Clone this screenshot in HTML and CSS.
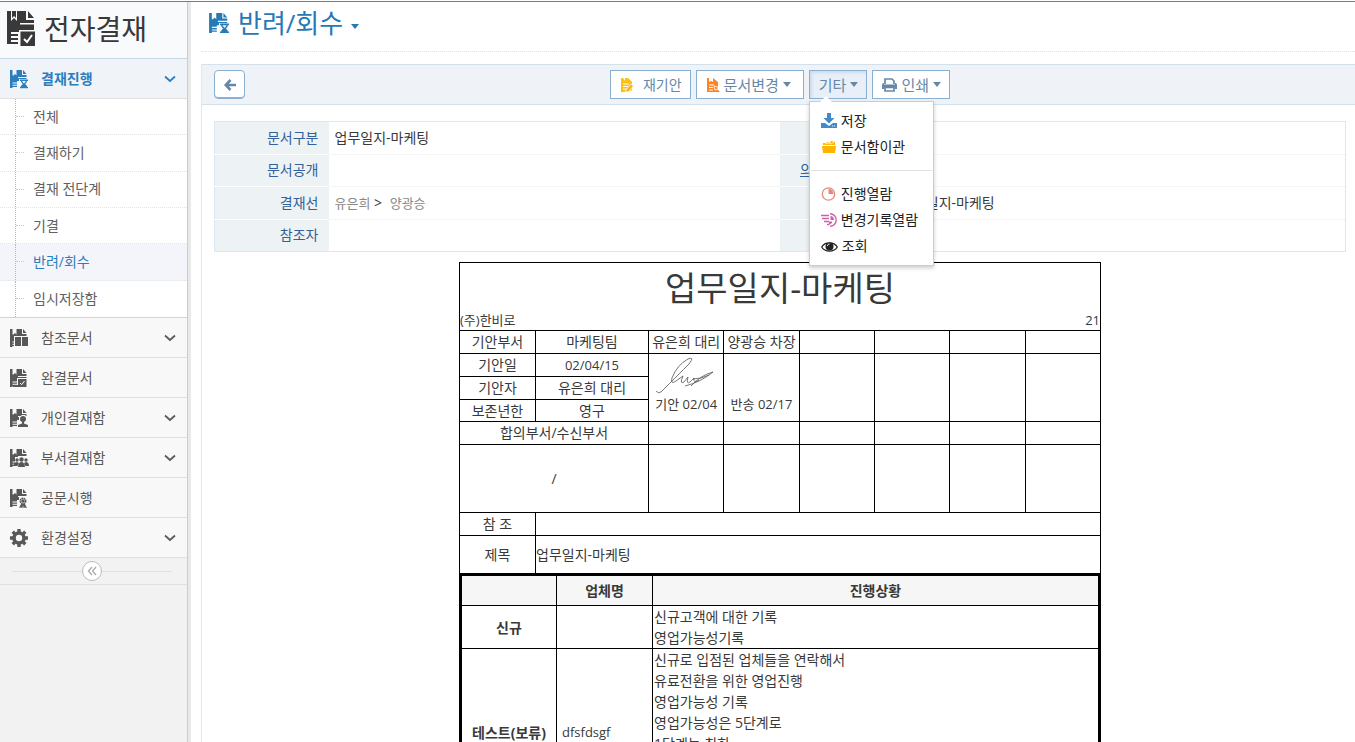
FILE: index.html
```html
<!DOCTYPE html>
<html lang="ko">
<head>
<meta charset="utf-8">
<title>전자결재</title>
<link rel="stylesheet" href="styles.css">
</head>
<body>
<svg class="defs" aria-hidden="true">
  <symbol id="doc" viewBox="0 0 20 20">
    <path d="M1 1h2.500v5.500h1L6 5l1.500 1.500V1H13v5h4.500v2H9v1h8.500v3H8v1.500H3.500v1H8v1.300H3.500v1H8V18H3.500v1H1zM14 1l3.500 4H14z"/>
  </symbol>
  <symbol id="glass" viewBox="0 0 20 20">
    <use href="#doc"/>
    <path class="cut" d="M10 10h10V20H10z"/>
    <path d="M11 10.500h8v1.500h-8zM11 17.700h8v1.500h-8zM12 12h1l2 2.500 2-2.500h1c0 1.500-1 2.200-2 3 1 .8 2 1.300 2 2.700h-6c0-1.400 1-1.900 2-2.700-1-.8-2-1.500-2-3z"/>
  </symbol>
  <symbol id="down" viewBox="0 0 12 8"><path d="M1 1.500l5 4.500 5-4.500" fill="none" stroke="currentColor" stroke-width="1.700"/></symbol>
</svg>
<div class="app">
  <nav class="side">
    <h1 class="brand">
      <svg class="brand-icon" viewBox="0 0 28 35"><path d="M0 0h4v10l3-3 3 3V0h9v9h8v3H13v1.500h14V19H12v2H4v2h7v2H4v2h7v2H4v2h7v2H0zM21 0l6 7h-6zM13 20h15v15H13z"/><path d="M5 0h4v7L7 5 5 7z"/><path d="M12 19h16v1.500H13.500V35H12z" class="cut"/><path d="M17 28l3 3 5-7" fill="none" stroke="#fff" stroke-width="2"/></svg>
      전자결재
    </h1>
    <button class="item open"><svg class="ic"><use href="#glass"/></svg><span>결재진행</span><svg class="chev"><use href="#down"/></svg></button>
    <ul class="sub">
      <li><a href="#">전체</a></li>
      <li><a href="#">결재하기</a></li>
      <li><a href="#">결재 전단계</a></li>
      <li><a href="#">기결</a></li>
      <li class="on"><a href="#">반려/회수</a></li>
      <li><a href="#">임시저장함</a></li>
    </ul>
    <button class="item"><svg class="ic" viewBox="0 0 20 20"><use href="#doc"/><path class="cut" d="M5 8h15v12H5z"/><path d="M6 9h6v9H6zM13 9h6v9h-6z"/></svg><span>참조문서</span><svg class="chev"><use href="#down"/></svg></button>
    <button class="item"><svg class="ic" viewBox="0 0 20 20"><use href="#doc"/><path class="cut" d="M8 10h10v10H8z"/><path d="M9 11h8.500v8H9zM4 17h5v2H4z"/><path d="M11 15l1.700 1.700L15.500 13" fill="none" stroke="#f8f8f8"/></svg><span>완결문서</span></button>
    <button class="item"><svg class="ic" viewBox="0 0 20 20"><use href="#doc"/><path class="cut" d="M8 20l2-4V9l3-2h3l3 3v10z"/><circle cx="14" cy="11" r="3"/><path d="M13 13h2v2.500l4 1.500v2H9v-2l4-1.500z"/></svg><span>개인결재함</span><svg class="chev"><use href="#down"/></svg></button>
    <button class="item"><svg class="ic" viewBox="0 0 20 20"><use href="#doc"/><path class="cut" d="M6 9h14v11H6z"/><circle cx="8" cy="12" r="1.700"/><circle cx="17" cy="12" r="1.700"/><circle cx="12.500" cy="11.500" r="2.200"/><path d="M4.500 18c0-3 1.500-4 3.500-4l2 1-1.500 3zM20 18c0-3-1.500-4-3-4l-2 1 1.500 3zM9 19c0-3 1.500-5 3.500-5s3.500 2 3.500 5z"/></svg><span>부서결재함</span><svg class="chev"><use href="#down"/></svg></button>
    <button class="item"><svg class="ic" viewBox="0 0 20 20"><use href="#doc"/><path class="cut" d="M10 9h9v11h-9z"/><circle cx="14" cy="13" r="2.500" fill="none" stroke="currentColor" stroke-width="2" stroke-dasharray="1.500 .5"/><circle cx="14" cy="13" r="1.300"/><path d="M12 16l-2 4 2-.5L13.500 20l.5-3 .5 3 1.500-.5 2 .5-2-4z"/></svg><span>공문시행</span></button>
    <button class="item"><svg class="ic" viewBox="0 0 20 20"><circle cx="10" cy="10" r="5" fill="none" stroke="currentColor" stroke-width="3.600"/><path d="M8.300 1h3.400v3H8.300zM8.300 16h3.400v3H8.300zM1 8.300h3v3.400H1zM16 8.300h3v3.400h-3zM2.500 5l2.400-2.400L7 4.700 4.700 7zM13 4.700l2.100-2.100L17.500 5l-2.200 2zM2.500 15l2.200-2L7 15.300l-2.100 2.100zM13 15.300l2.300-2.300 2.200 2-2.400 2.400z"/></svg><span>환경설정</span><svg class="chev"><use href="#down"/></svg></button>
    <div class="fold"><button class="fold-btn" aria-label="메뉴 접기"><svg width="10" height="10" viewBox="0 0 10 10"><path d="M5 1L1.500 5 5 9M9 1L5.500 5 9 9" fill="none" stroke="currentColor" stroke-width="1.300"/></svg></button></div>
  </nav>
  <main class="main">
    <h2 class="title"><svg class="title-icon"><use href="#glass"/></svg><span>반려/회수</span><i class="tri"></i></h2>
    <section class="panel">
      <div class="bar">
        <button class="btn back" aria-label="뒤로"><svg width="12" height="12" viewBox="0 0 12 12"><path d="M6.500 1L1.800 6l4.700 5M2 6h10" fill="none" stroke="currentColor" stroke-width="2.600"/></svg></button>
        <div class="group">
          <button class="btn redo"><svg width="14" height="16" viewBox="0 0 14 16"><path d="M1 1h2l2 3V1h3l4 4v8l-4 2H1z" fill="#fcc00e"/><path d="M3 7h6M3 9.500h5M3 12h4" stroke="#fff"/><path d="M6 13l5-6 2.500 2-5 5.500-3 .5z" fill="#f4b324" stroke="#fff" stroke-width=".7"/></svg>재기안</button>
          <button class="btn change"><svg width="14" height="16" viewBox="0 0 14 16"><path d="M1 1h2v4l2-1 2 1V1l5 4v8l2 2H1z" fill="#fb8428"/><path d="M3 8h5M3 10.500h4M3 13h4" stroke="#fff"/><path d="M8 9l4 1v2l-3 1z" fill="#fb8428" stroke="#fff" stroke-width=".8"/></svg>문서변경<i class="tri"></i></button>
          <div class="drop">
            <button class="btn active" aria-expanded="true">기타<i class="tri"></i></button>
            <div class="menu">
              <a href="#"><svg width="16" height="16" viewBox="0 0 16 16"><path d="M6 0h4v5h3.500L8 10.500 2.500 5H6zM0 10h4l4 3 4-3h4v5H0z" fill="#428bca"/><path d="M11 13h1M13 13h1" stroke="#fff"/></svg>저장</a>
              <a href="#"><svg width="16" height="16" viewBox="0 0 16 16"><path d="M1 7h14l-1 7H2zM2 6V4h3l1-1 3 1 1-2 4 1v3z" fill="#ffb400"/><path d="M4 5l4-1 2 1 3-2" stroke="#fff" fill="none" stroke-width=".7"/></svg>문서함이관</a>
              <hr>
              <a href="#"><svg width="16" height="16" viewBox="0 0 16 16"><circle cx="7.500" cy="8" r="6.200" fill="none" stroke="#e58a7b" stroke-width="1.300"/><path d="M7.500 3v5h5c0-3-2-5-5-5z" fill="#e58a7b"/></svg>진행열람</a>
              <a href="#"><svg width="16" height="16" viewBox="0 0 16 16"><path d="M0 3.500h8M1 6.500h7M3 9.500h5M6 12.500h2" stroke="#cf5fa8" stroke-width="1.500"/><path d="M9 1.800a6.200 6.200 0 0 1 0 12.400" fill="none" stroke="#cf5fa8" stroke-width="1.400"/><path d="M9.500 4v4h3.500c0-2.500-1.500-4-3.500-4zM8 9.500h3v1.500l-3 2z" fill="#cf5fa8"/></svg>변경기록열람</a>
              <a href="#"><svg width="17" height="16" viewBox="0 0 17 16"><path d="M.7 9C4 3.500 13 3.500 16.300 9 13 14.500 4 14.500.7 9z" fill="none" stroke="#222" stroke-width="1.300"/><circle cx="8.500" cy="8.500" r="4" fill="#222"/><path d="M6.500 8c0-1.300.7-2 2-2" fill="none" stroke="#fff"/></svg>조회</a>
            </div>
          </div>
          <button class="btn"><svg width="15" height="14" viewBox="0 0 15 14"><path d="M3 6V1h7l2 2v3M3 9.500h9V13H3z" fill="none" stroke="currentColor" stroke-width="1.700"/><path d="M0 7q0-2 2-2v1.500h11V5q2 0 2 2v4h-2V9H2v2H0z"/></svg>인쇄<i class="tri"></i></button>
        </div>
      </div>
      <div class="body">
        <table class="info">
          <colgroup><col class="k"><col><col class="k"><col></colgroup>
          <tr><th>문서구분</th><td>업무일지-마케팅</td><th></th><td></td></tr>
          <tr><th>문서공개</th><td></td><th class="opinion"><a href="#">의견</a></th><td></td></tr>
          <tr><th>결재선</th><td class="line"><span>유은희</span> &gt; <span>양광승</span></td><th></th><td>업무일지-마케팅</td></tr>
          <tr><th>참조자</th><td></td><th></th><td></td></tr>
        </table>
        <article class="doc">
          <header class="doc-head">
            <h3>업무일지-마케팅</h3>
            <p><span>(주)한비로</span><span>21</span></p>
          </header>
          <table class="sign">
            <colgroup><col class="a"><col class="b"><col><col><col><col><col><col></colgroup>
            <tr><td>기안부서</td><td>마케팅팀</td><td>유은희 대리</td><td>양광승 차장</td><td></td><td></td><td></td><td></td></tr>
            <tr><td>기안일</td><td class="num">02/04/15</td><td rowspan="3" class="stamp"><svg viewBox="0 0 62 38" width="62" height="38"><path d="M1 34q2 3 5 1Q24 17 34 7q6-8-1-5-11 6-16 19-2 7 4 3l7-5q-4 9 1 6l4-5q-2 8 2 5l4-4q-1 6 5 2M30 29q16-4 28-14-12 3-22 14M38 22q8 0 16-4" fill="none" stroke="#555" stroke-width=".8"/></svg><br>기안 02/04</td><td rowspan="3" class="stamp">반송 02/17</td><td rowspan="3"></td><td rowspan="3"></td><td rowspan="3"></td><td rowspan="3"></td></tr>
            <tr><td>기안자</td><td>유은희 대리</td></tr>
            <tr class="keep"><td>보존년한</td><td>영구</td></tr>
            <tr><td colspan="2">합의부서/수신부서</td><td></td><td></td><td></td><td></td><td></td><td></td></tr>
            <tr class="tall"><td colspan="2">/</td><td></td><td></td><td></td><td></td><td></td><td></td></tr>
            <tr><td>참 조</td><td colspan="7"></td></tr>
            <tr class="subject"><td>제목</td><td colspan="7" class="left">업무일지-마케팅</td></tr>
          </table>
          <table class="report">
            <colgroup><col class="c"><col class="c"><col></colgroup>
            <thead><tr><th></th><th>업체명</th><th>진행상황</th></tr></thead>
            <tbody>
              <tr><th>신규</th><td></td><td>신규고객에 대한 기록<br>영업가능성기록</td></tr>
              <tr class="long"><th>테스트(보류)</th><td class="name">dfsfdsgf</td><td class="top">신규로 입점된 업체들을 연락해서<br>유료전환을 위한 영업진행<br>영업가능성 기록<br>영업가능성은 5단계로<br>1단계는 최하</td></tr>
            </tbody>
          </table>
        </article>
      </div>
    </section>
  </main>
</div>
</body>
</html>
```
FILE: styles.css
```css
* { box-sizing: border-box; }
body {
  margin: 0;
  font: 14px/20px "Open Sans", "Noto Sans CJK KR", sans-serif;
  color: #393939;
  background: #fff;
}
button { font: inherit; color: inherit; }
a { color: inherit; text-decoration: none; }
svg { fill: currentColor; flex: none; }
.defs { position: absolute; width: 0; height: 0; }
.cut { fill: #f8f8f8; }

.app {
  display: flex;
  height: 100vh;
  overflow: hidden;
  border-top: 1px solid #438eb9;
  margin-top: 1px;
}

/* sidebar */
.side {
  flex: none;
  width: 188px;
  background: #f2f2f2;
  border-right: 1px solid #ccc;
}
.brand {
  display: flex;
  align-items: center;
  gap: 9px;
  height: 57px;
  margin: 0;
  padding: 0 7px 3px;
  font-size: 28px;
  font-weight: 400;
  background: #f9fafc;
  border-bottom: 1px solid #c5d6e4;
}
.brand-icon { width: 28px; height: 35px; }
.item {
  display: flex;
  align-items: center;
  width: 100%;
  height: 40px;
  padding: 0 11px 0 9px;
  border: 0;
  border-bottom: 1px solid #e0e0e0;
  background: #f8f8f8;
  color: #585858;
  text-align: left;
}
.item span { flex: 1; padding-left: 12px; }
.item.open { background: #f0f4f9; color: #2b7dbc; font-weight: 700; }
.item.open .cut { fill: #f0f4f9; }
.ic { width: 20px; height: 20px; }
.chev { width: 12px; height: 8px; }
.sub {
  display: grid;
  grid-auto-rows: 1fr;
  height: 219px;
  margin: 0;
  padding: 0;
  list-style: none;
  background: #fff;
  border-bottom: 1px solid #ccd6db;
  color: #616161;
}
.sub li { display: flex; border-bottom: 1px dotted #e4e4e4; }
.sub li:last-child { border-bottom: 0; }
.sub .on { background: #f4f5fa; color: #2b7dbc; }
.sub a {
  display: flex;
  flex: 1;
  align-items: center;
  gap: 9px;
  margin-left: 15px;
  border-left: 1px dotted #9dbdd6;
}
.sub a::before { content: ""; width: 8px; border-top: 1px dotted #bccfe0; }
.fold {
  display: grid;
  place-items: center;
  height: 27px;
  padding-right: 3px;
  border-bottom: 1px solid #e0e0e0;
  background: linear-gradient(#e0e0e0, #e0e0e0) 12px center / 160px 1px no-repeat;
}
.fold-btn {
  display: grid;
  place-items: center;
  width: 20px;
  height: 20px;
  padding: 0;
  border: 1px solid #bbb;
  border-radius: 50%;
  background: #fff;
  color: #aaa;
}

/* main */
.main { flex: 1; min-width: 0; padding-left: 10px; border-left: 3px solid #e9e9e9; }
.title {
  display: flex;
  align-items: center;
  gap: 8px;
  height: 50px;
  margin: 0 0 12px;
  padding: 0 7px 8px;
  font-size: 26px;
  font-weight: 400;
  color: #2679b5;
  border-bottom: 1px dotted #e2e2e2;
}
.title-icon { width: 22px; height: 24px; }
.title .cut { fill: #fff; }
.tri {
  border: 4px solid transparent;
  border-top: 5px solid;
  border-bottom: 0;
}
.title .tri { margin-top: 8px; }
.panel { border-left: 1px solid #dfe8f0; }
.bar {
  display: grid;
  grid-template-columns: 1fr auto 1fr;
  align-items: center;
  height: 41px;
  padding: 0 9px 0 12px;
  background: #eff3f8;
  border: solid #d3e1eb;
  border-width: 1px 0;
}
.group { display: flex; gap: 5px; }
.btn {
  display: flex;
  align-items: center;
  gap: 4px;
  height: 29px;
  padding: 0 8px 0 9px;
  border: 1px solid #8ab0d1;
  background: #fff;
  color: #6688a6;
  font-size: 15px;
}
.back { width: 31px; justify-content: center; border-radius: 4px; box-shadow: inset 0 -1px #8ab0d1; padding: 0; }
.redo { gap: 9px; font-size: 14px; }
.change { padding-right: 12px; }
.active { background: #e8eff8; box-shadow: inset 2px 2px 3px #cddcea; }
.drop { position: relative; }
.menu {
  position: absolute;
  z-index: 2;
  top: 31px;
  left: 0;
  width: 125px;
  padding: 6px 1px;
  background: #fff;
  border: 1px solid #ccc;
  box-shadow: 0 2px 4px #0003;
  color: #222;
}
.menu::before {
  content: "";
  position: absolute;
  top: -6px;
  left: 10px;
  border: 6px solid transparent;
  border-top: 0;
  border-bottom-color: #fff;
}
.menu a { display: flex; align-items: center; gap: 4px; height: 26px; padding-left: 10px; white-space: nowrap; }
.menu hr { margin: 10px 0; border: 0; border-top: 1px solid #e2e2e2; }

.body { padding: 16px 9px 0 12px; }
table { border-collapse: collapse; table-layout: fixed; }
.info { width: 100%; height: 131px; border: 1px solid #dce8f1; }
.info th, .info td { padding: 0 6px; font-weight: 400; }
.info th { padding-right: 10px; text-align: right; color: #336199; background: #edf3f4; border-bottom: 1px solid #fff; }
.info td { border-bottom: 1px dotted #ebebeb; }
.info tr:last-child > * { border-bottom-color: #dce8f1; border-bottom-style: solid; }
.info .k { width: 114px; }
.info .opinion { padding-left: 20px; text-align: left; text-decoration: underline; }
.line span { font-size: 13px; color: #888; }
.line span + span { margin-left: 4px; }

.doc { width: 642px; margin: 10px auto 0; }
.doc-head { border: 1px solid #000; border-bottom: 0; padding-top: 3px; }
.doc-head h3 { margin: 0; font-size: 34px; line-height: 44px; font-weight: 400; text-align: center; }
.doc-head p { display: flex; justify-content: space-between; margin: 0; font-size: 13px; }
.sign, .report { width: 100%; }
.sign td { padding: 0; border: 1px solid #000; text-align: center; line-height: 18px; }
.sign tr { height: 23px; }
.sign .keep { height: 22px; }
.sign .a { width: 76px; }
.sign .b { width: 113px; }
.sign .num, .sign .stamp { font-size: 13px; }
.sign .stamp { vertical-align: bottom; padding-bottom: 8px; }
.stamp svg { vertical-align: bottom; }
.sign .tall { height: 68px; }
.sign .subject { height: 38px; }
.sign .left { text-align: left; }
.report { margin-top: -1px; border: 3px solid #000; }
.report th, .report td { padding: 0 1px; border: 1px solid #000; line-height: 21px; }
.report thead { background: #f6f6f6; }
.report thead tr { height: 31px; }
.report .c { width: 96px; }
.report .long { height: 169px; }
.report .name { padding-left: 5px; font-size: 13px; }
.report .top { vertical-align: top; }
```
